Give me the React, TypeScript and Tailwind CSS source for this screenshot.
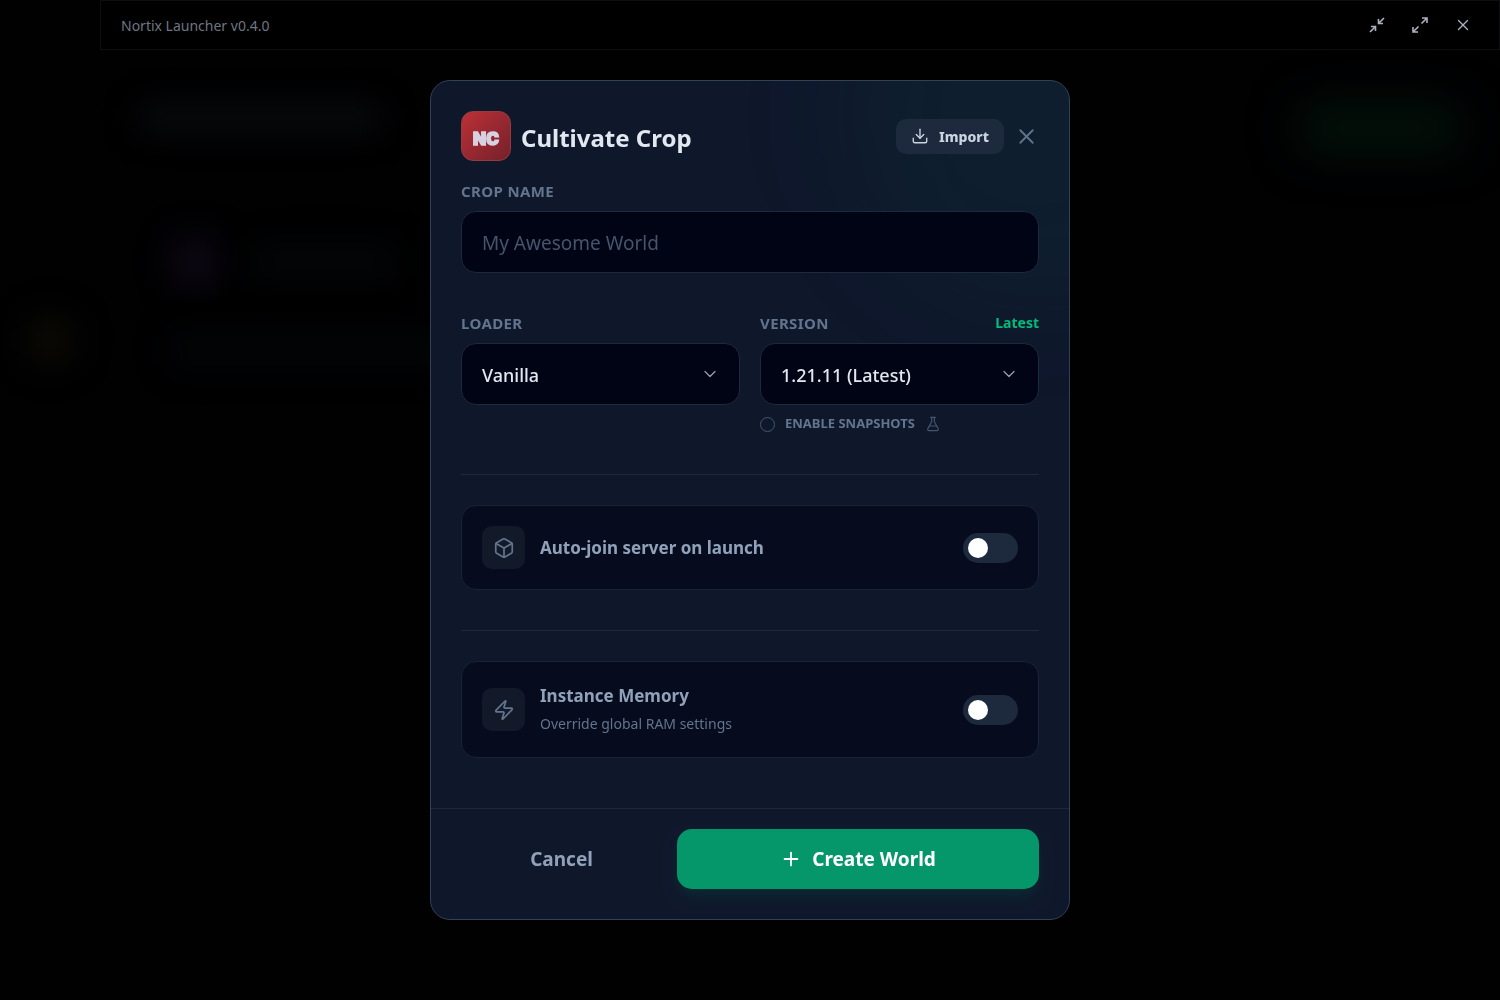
import React from "react";
import { Box, ChevronDown, Download, FlaskConical, Plus, X, Zap } from "lucide-react";

const labelClass = "text-[15px] leading-5 font-bold tracking-wide text-slate-500 uppercase";
const fieldClass =
  "h-[62px] w-full appearance-none rounded-[15px] border border-slate-800 bg-[#010414] px-5 pt-0.5 outline-none";

function MinimizeIcon() {
  return (
    <svg width="18" height="18" viewBox="0 0 18 18" fill="none" stroke="currentColor" strokeWidth="1.6" aria-hidden="true">
      <path d="M16 2 10.5 7.5M10.5 3v4.5H15M2 16l5.500-5.500M3 10.500h4.500V15" />
    </svg>
  );
}

function MaximizeIcon() {
  return (
    <svg width="18" height="18" viewBox="0 0 18 18" fill="none" stroke="currentColor" strokeWidth="1.6" aria-hidden="true">
      <path d="M10.500 7.500 16 2M11 2H16v5M7.500 10.500 2 16M2 11v5h5" />
    </svg>
  );
}

function Backdrop() {
  return (
    <div className="flex flex-1" aria-hidden="true">
      <div className="flex w-[100px] flex-col items-center pt-[266px]">
        <div className="size-12 rounded-xl bg-[#0a0904] blur-lg" />
      </div>
      <div className="flex flex-1 flex-col px-10 pt-14">
        <div className="flex items-start justify-between">
          <div className="h-6 w-60 bg-[#0a0c0d] blur-lg" />
          <div className="h-11 w-40 rounded-xl bg-[#03140c] blur-xl" />
        </div>
        <div className="mt-22 ml-8 flex items-center gap-8">
          <div className="size-12 rounded-xl bg-[#0d0814] blur-lg" />
          <div className="h-8 w-36 bg-[#040607] blur-lg" />
        </div>
        <div className="mt-12 ml-8 h-8 w-72 bg-[#030506] blur-lg" />
      </div>
    </div>
  );
}

function SelectField({ id, options }: { id: string; options: string[] }) {
  return (
    <div className="relative">
      <select id={id} className={`${fieldClass} text-[18px] font-medium text-slate-200`}>
        {options.map((o) => (
          <option key={o}>{o}</option>
        ))}
      </select>
      <ChevronDown
        size={20}
        strokeWidth={1.5}
        className="pointer-events-none absolute top-1/2 right-5 -translate-y-1/2 text-slate-400"
      />
    </div>
  );
}

function ToggleCard({
  id,
  icon,
  title,
  detail,
}: {
  id: string;
  icon: React.ReactNode;
  title: string;
  detail?: string;
}) {
  return (
    <div className="flex items-center rounded-[15px] border border-[#1a2336] bg-[#060c1d] p-5">
      <div className="flex size-[43px] shrink-0 items-center justify-center rounded-[10px] bg-[#121a2a] text-slate-500">
        {icon}
      </div>
      <label htmlFor={id} className="ml-[15px] flex-1">
        <span className="block text-[17px] leading-7 font-bold text-slate-400">{title}</span>
        {detail && <span className="block text-[14px] leading-[27px] text-slate-500">{detail}</span>}
      </label>
      <input
        id={id}
        type="checkbox"
        role="switch"
        className="h-[30px] w-[55px] shrink-0 appearance-none rounded-full bg-slate-800 p-[5px] before:block before:size-5 before:rounded-full before:bg-white checked:bg-emerald-600 checked:before:translate-x-[25px]"
      />
    </div>
  );
}

export default function App() {
  return (
    <div className="flex min-h-screen flex-col overflow-hidden bg-[#010102] font-['Noto_Sans',sans-serif]">
      <header className="ml-[100px] flex h-[50px] items-center justify-between border border-[#0d0e10] bg-black pr-[27px] pl-5">
        <span className="text-[14px] text-[#6f7683]">Nortix Launcher v0.4.0</span>
        <div className="flex items-center gap-[25px] text-[#aab2c0]">
          <button type="button" aria-label="Minimize"><MinimizeIcon /></button>
          <button type="button" aria-label="Maximize"><MaximizeIcon /></button>
          <button type="button" aria-label="Close window"><X size={18} strokeWidth={1.8} /></button>
        </div>
      </header>
      <Backdrop />

      <div className="fixed inset-0 flex items-center justify-center p-5">
        <form
          role="dialog"
          aria-labelledby="dialog-title"
          className="relative w-full max-w-[640px] overflow-hidden rounded-[20px] border border-slate-700 bg-slate-900"
          onSubmit={(e) => e.preventDefault()}
        >
          <div className="pointer-events-none absolute -top-40 -right-40 size-96 rounded-full bg-emerald-500/5 blur-[60px]" />
          <div className="relative px-[30px] pt-[30px] pb-[50px]">
            <div className="flex items-center">
              <div className="flex size-[50px] items-center justify-center rounded-xl border border-[#943a40] bg-linear-to-br from-[#bd3036] to-[#75202a]">
                <span className="pt-1.5 font-['Inter',sans-serif] text-[17px] leading-none font-black text-[#d8d2e0] [-webkit-text-stroke:1.5px_#d8d2e0]">
                  NC
                </span>
              </div>
              <h1 id="dialog-title" className="ml-2.5 flex-1 pt-1 text-[24px] leading-8 font-bold text-slate-200">
                Cultivate Crop
              </h1>
              <button
                type="button"
                className="flex h-[35px] items-center gap-2.5 rounded-[10px] bg-slate-800 px-[15px] text-[14px] font-extrabold text-slate-300"
              >
                <Download size={18} strokeWidth={1.8} />
                Import
              </button>
              <button type="button" aria-label="Close" className="ml-2.5 text-slate-500">
                <X size={25} strokeWidth={1.7} />
              </button>
            </div>

            <div className="mt-5">
              <label htmlFor="crop-name" className={`${labelClass} block`}>Crop name</label>
              <input
                id="crop-name"
                type="text"
                placeholder="My Awesome World"
                className={`${fieldClass} mt-2.5 text-[19px] text-slate-200 placeholder:text-slate-600`}
              />
            </div>

            <div className="mt-10 grid grid-cols-2 gap-5">
              <div>
                <label htmlFor="loader" className={`${labelClass} mb-2.5 block`}>Loader</label>
                <SelectField id="loader" options={["Vanilla"]} />
              </div>
              <div>
                <div className="mb-2.5 flex items-center justify-between">
                  <label htmlFor="version" className={labelClass}>Version</label>
                  <span className="text-[14px] leading-5 font-bold text-emerald-500">Latest</span>
                </div>
                <SelectField id="version" options={["1.21.11 (Latest)"]} />
                <label className="mt-[9px] flex h-5 items-center gap-2.5 text-[13px] font-bold text-slate-500 uppercase">
                  <input
                    type="checkbox"
                    className="size-[15px] appearance-none rounded-full border border-slate-600 checked:bg-emerald-600"
                  />
                  Enable snapshots
                  <FlaskConical size={16} strokeWidth={1.8} className="text-slate-600" />
                </label>
              </div>
            </div>

            <hr className="mt-10 mb-[30px] border-slate-800" />
            <ToggleCard id="auto-join" icon={<Box size={22} strokeWidth={1.9} />} title="Auto-join server on launch" />
            <hr className="mt-10 mb-[30px] border-slate-800" />
            <ToggleCard
              id="memory"
              icon={<Zap size={22} strokeWidth={1.9} />}
              title="Instance Memory"
              detail="Override global RAM settings"
            />
          </div>

          <div className="relative grid grid-cols-[5fr_9fr] gap-[15px] border-t border-slate-800 px-[30px] pt-5 pb-[30px] text-[19px] font-bold">
            <button type="button" className="rounded-[15px] text-slate-400">Cancel</button>
            <button
              type="submit"
              className="flex h-[60px] items-center justify-center gap-2.5 rounded-[15px] bg-[#059669] text-white shadow-lg shadow-emerald-900/25"
            >
              <Plus size={22} strokeWidth={2} />
              Create World
            </button>
          </div>
        </form>
      </div>
    </div>
  );
}
